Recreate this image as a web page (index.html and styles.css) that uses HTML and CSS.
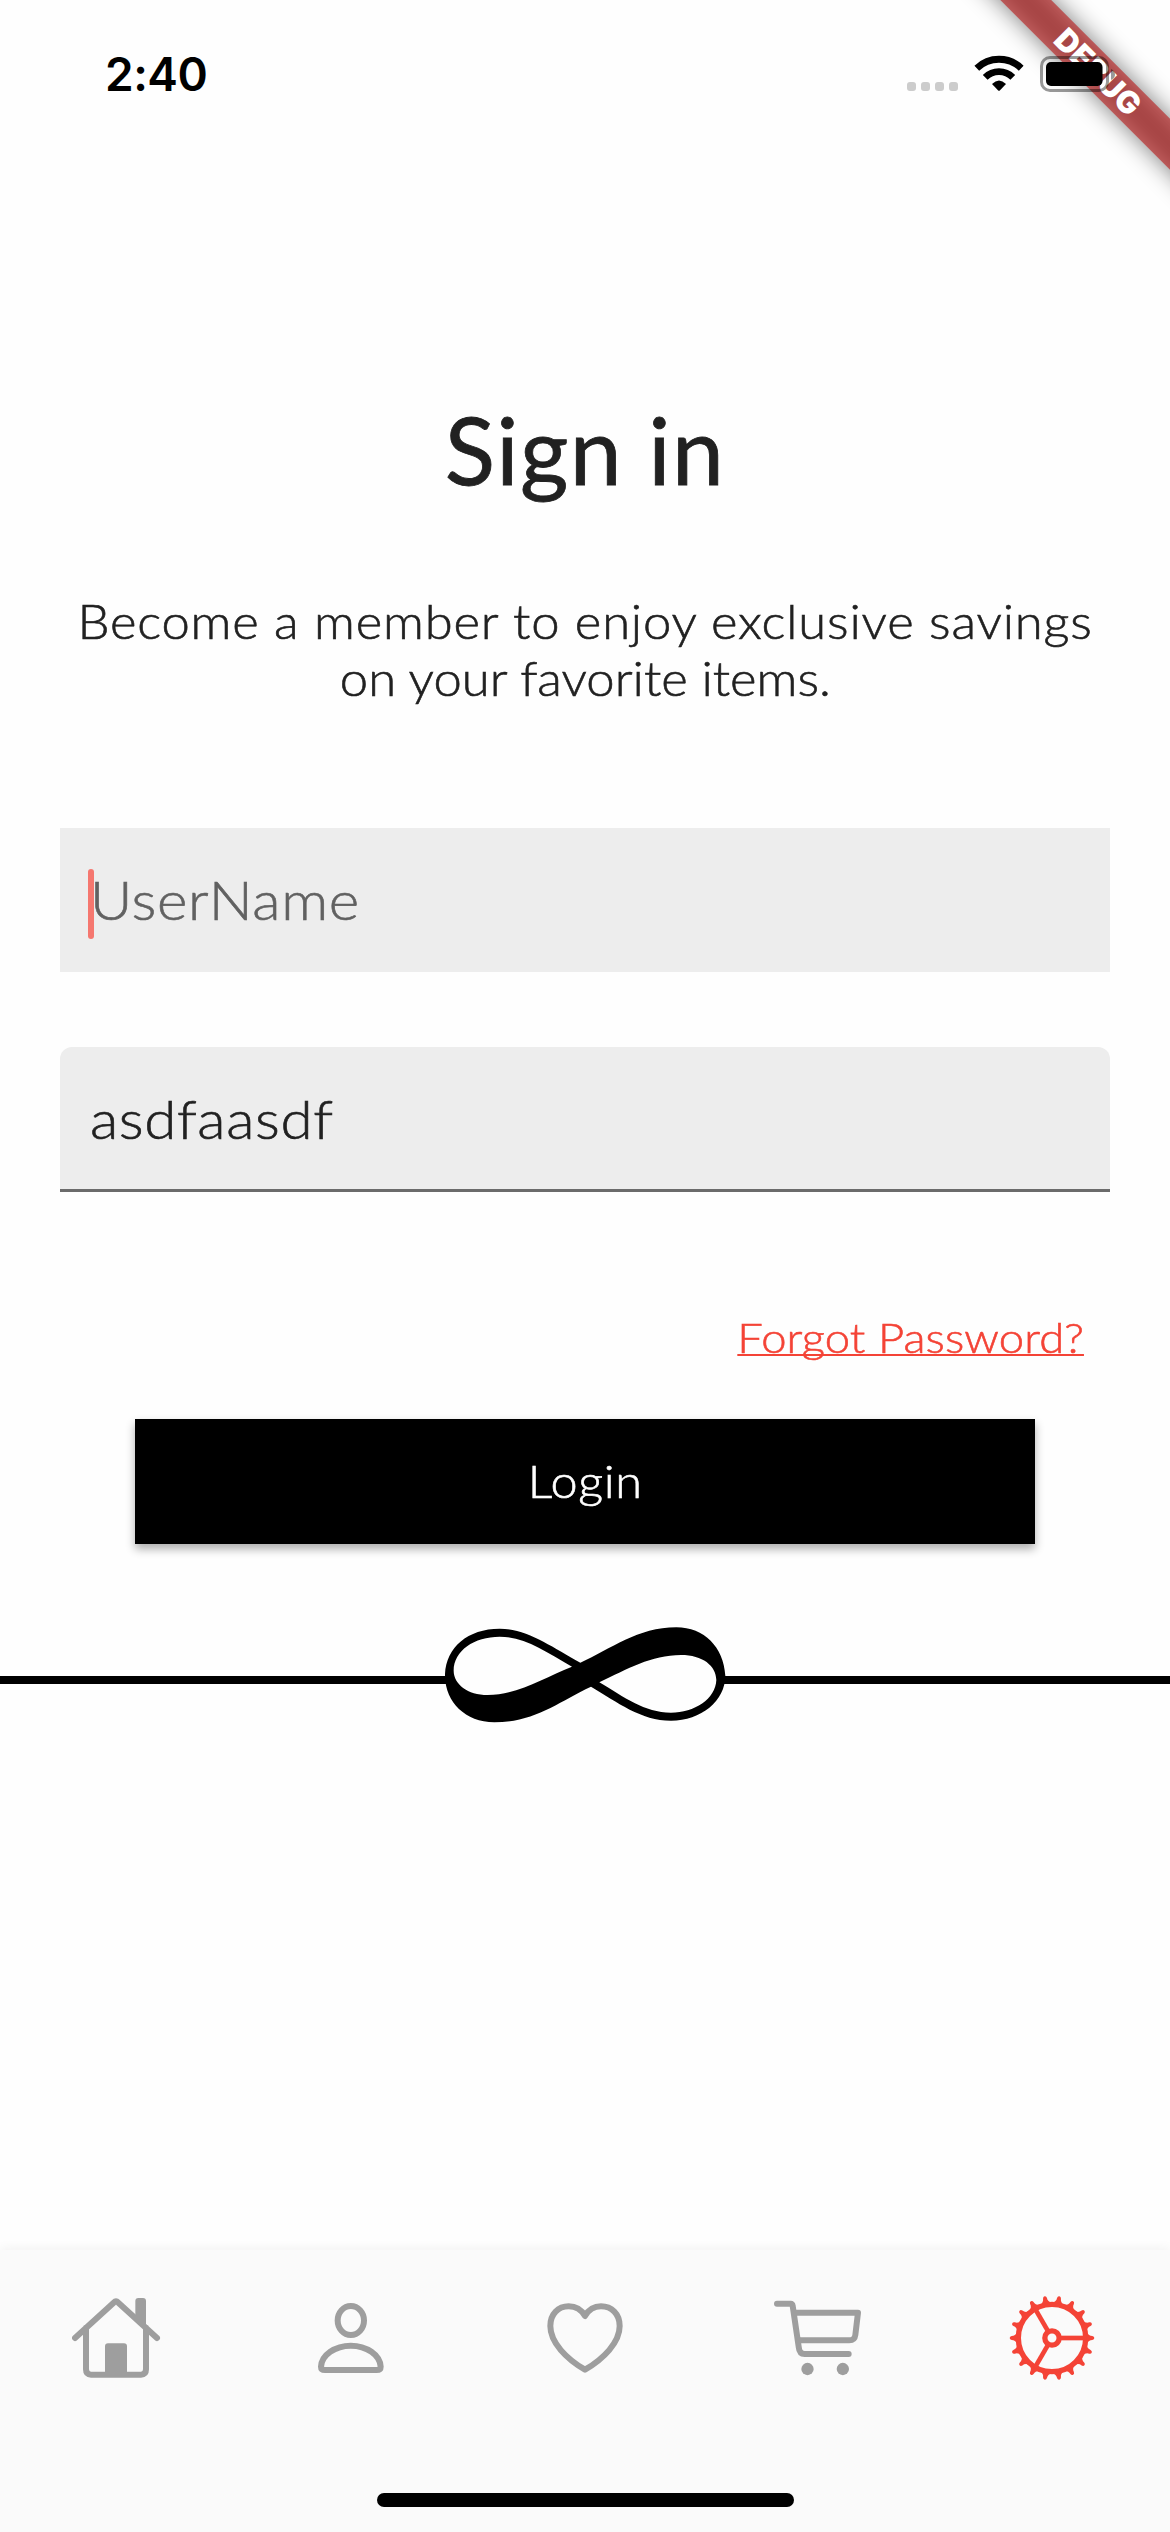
FILE: index.html
```html
<!DOCTYPE html>
<html lang="en">
<head>
<meta charset="utf-8">
<title>Sign in</title>
<link rel="stylesheet" href="styles.css">
</head>
<body>
<div class="screen">
  <div class="debug"><div class="debug-shadow"></div><div class="debug-band"><span>DEBUG</span></div></div>

  <header class="status">
    <span class="time">2:40</span>
    <div class="indicators">
      <div class="dots"><i></i><i></i><i></i><i></i></div>
      <svg class="wifi" viewBox="974 54 50 38">
        <g fill="none" stroke="#000" stroke-width="6.8">
          <path d="M976.8 68.2A32 32 0 0 1 1021.2 68.2"/>
          <path d="M985.2 77.3A19.6 19.6 0 0 1 1012.8 77.3"/>
        </g>
        <path d="M992 84Q999 77 1006 84L999.8 90.4Q999 91.2 998.2 90.4Z"/>
      </svg>
      <svg class="battery" viewBox="1040 56 76 36">
        <rect x="1041.5" y="57.5" width="66" height="33" rx="8.5" fill="none" stroke="#000" stroke-opacity=".4" stroke-width="3"/>
        <rect x="1046" y="62" width="56.500" height="24" rx="5"/>
        <path d="M1111 69Q1115 71 1115 74.500T1111 80Z" fill-opacity=".4"/>
      </svg>
    </div>
  </header>

  <main class="content">
    <h1 class="title">Sign in</h1>
    <p class="lead"><span class="wide line-a">Become a member to enjoy exclusive savings</span><br><span class="wide line-b">on your favorite items.</span></p>
    <div class="field field-user"><span class="caret"></span><span class="wide">UserName</span></div>
    <div class="field field-pass"><span class="wide">asdfaasdf</span></div>
    <a class="forgot"><span class="wide">Forgot Password?</span></a>
    <div class="login"><span class="wide">Login</span></div>
    <div class="divider">
      <span class="rule"></span>
      <svg class="infinity" viewBox="72 79 843 288">
        <path fill-rule="evenodd" d="M72 220C76 140 140 84 236 84C320 84 390 138 478 186C570 145 650 80 766 80C850 80 908 140 913 225C913 300 840 360 750 360C660 360 590 305 510 258C410 305 340 365 220 365C130 365 70 300 72 220ZM98 210C98 150 160 108 236 108C310 108 370 150 453 198C370 230 290 283 200 283C140 283 98 250 98 210ZM535 245C620 205 690 163 780 163C845 163 885 195 886 238C884 295 820 336 750 336C670 336 610 290 535 245Z"/>
      </svg>
      <span class="rule"></span>
    </div>
  </main>

  <nav class="tabs">
    <div class="tab"><svg viewBox="96 186 270 270">
      <path class="stroke" d="M105 324L221 218Q228 211 235 218L351 324M138 293V418Q138 434 153 434H303Q318 434 318 418V293"/>
      <path class="solid" d="M195 435V349Q195 340 204 340H252Q261 340 261 349V435ZM286 262V213Q286 204 295 204H309Q318 204 318 213V290Z"/>
    </svg></div>
    <div class="tab"><svg viewBox="798 186 270 270">
      <ellipse class="stroke" cx="932.5" cy="271.500" rx="39.500" ry="43.500"/>
      <path class="stroke" d="M843 410C845 375 885 347 932.500 347C980 347 1020 375 1022 410Q1022 420 1010 420H855Q843 420 843 410Z"/>
    </svg></div>
    <div class="tab"><svg viewBox="120 186 270 270">
      <path class="stroke" d="M255 258C244 239 226 229 206 229C175 229 151 252 151 288C151 338 200 387 255 419C310 387 359 338 359 288C359 252 335 229 303 229C284 229 266 239 255 258Z"/>
    </svg></div>
    <div class="tab"><svg viewBox="822 186 270 270">
      <path class="stroke" d="M831 221H872Q877 221 878 227L896 350Q898 372 914 372H1046M887 248H1074L1066 315Q1064 331 1048 331H902"/>
      <circle class="solid" cx="922.500" cy="417" r="18.500"/><circle class="solid" cx="1028.500" cy="417" r="18.500"/>
    </svg></div>
    <div class="tab tab-active"><svg viewBox="84 66 270 270">
      <defs>
        <path id="tooth" class="solid" d="M320 186Q326 198 337 198Q343 199 343 204T337 210Q326 210 320 222Z"/>
        <g id="teeth"><use href="#tooth"/><use href="#tooth" transform="rotate(20 216 204)"/><use href="#tooth" transform="rotate(40 216 204)"/></g>
        <g id="third"><use href="#teeth"/><use href="#teeth" transform="rotate(60 216 204)"/><path class="spoke" d="M240 204H318"/></g>
      </defs>
      <circle class="ring" cx="216" cy="204" r="101"/><circle class="ring" cx="216" cy="204" r="21.500"/>
      <use href="#third"/><use href="#third" transform="rotate(120 216 204)"/><use href="#third" transform="rotate(240 216 204)"/>
    </svg></div>
    <div class="home-indicator"></div>
  </nav>
</div>
</body>
</html>
```
FILE: styles.css
```css
* { box-sizing: border-box; }
body { margin: 0; }
.screen {
  position: relative;
  width: 1170px;
  height: 2532px;
  overflow: hidden;
  display: flex;
  flex-direction: column;
  background: #fefefe;
  font-family: Lato, "Open Sans", sans-serif;
  font-weight: 300;
  color: #212121;
}
.screen svg { display: block; flex: none; }

/* corner ribbon, drawn beneath the status icons */
.debug {
  position: absolute;
  left: 1170px;
  top: 0;
  width: 0;
  height: 0;
  transform: rotate(45deg);
}
.debug-shadow, .debug-band {
  position: absolute;
  left: -240px;
  top: 84px;
  width: 480px;
  height: 36px;
}
.debug-shadow { background: rgba(0, 0, 0, .5); filter: blur(12px); }
.debug-band {
  background: rgba(183, 28, 28, .63);
  color: #fff;
  font-family: Inter, sans-serif;
  font-size: 31px;
  font-weight: 900;
  line-height: 36px;
  text-align: center;
}

.status {
  position: relative;
  height: 140px;
  flex: none;
  display: flex;
  justify-content: space-between;
  padding: 0 54px 0 105px;
}
.time { font: 600 46px/56px Inter, sans-serif; letter-spacing: -.5px; padding-top: 46px; color: #000; }
.indicators { display: flex; align-items: flex-start; }
.dots { display: flex; gap: 5px; padding-top: 82px; margin-right: 16px; }
.dots i { width: 9px; height: 9px; border-radius: 3px; background: #ccc; }
.wifi { width: 50px; height: 38px; margin: 54px 16px 0 0; }
.battery { width: 76px; height: 36px; margin: 56px 0 0; }

.content { flex: 1; display: flex; flex-direction: column; }
.title {
  margin: 253px 0 0;
  font-size: 93px;
  line-height: 112px;
  font-weight: 400;
  letter-spacing: 1.4px;
  text-align: center;
  -webkit-text-stroke: .8px #212121;
}
.lead {
  margin: 88px 0 0;
  font-size: 47px;
  line-height: 57px;
  text-align: center;
}
/* opens up the letterforms horizontally */
.wide { display: inline-block; transform: scaleX(1.08); }
.line-a { letter-spacing: .75px; }
.lead, .field, .forgot, .login { -webkit-text-stroke: .6px currentColor; }
.field {
  position: relative;
  height: 144px;
  margin: 0 60px;
  padding-left: 30px;
  background: #ededed;
  font-size: 54px;
  line-height: 144px;
  letter-spacing: .6px;
}
.field .wide { transform-origin: left; }
.field-user { margin-top: 121px; color: #616161; }
.field-pass {
  height: 145px;
  margin-top: 75px;
  border-bottom: 3px solid #6b6b6b;
  border-radius: 12px 12px 0 0;
}
.caret {
  position: absolute;
  left: 28px;
  top: 41px;
  width: 6px;
  height: 70px;
  border-radius: 3px;
  background: #f5776f;
}
.forgot {
  align-self: flex-end;
  margin: 116px 86px 0 0;
  height: 58px;
  font-size: 42px;
  line-height: 58px;
  letter-spacing: .1px;
  color: #f44336;
}
.forgot .wide {
  transform-origin: right;
  text-decoration: underline;
  text-decoration-thickness: 2px;
  text-decoration-skip-ink: none;
}
.login {
  height: 125px;
  margin: 53px 135px 0;
  background: #000;
  color: #fff;
  font-size: 45px;
  line-height: 124px;
  letter-spacing: .6px;
  text-align: center;
  box-shadow: 0 5px 9px rgba(0, 0, 0, .32);
}
.divider { display: flex; align-items: center; margin-top: 83px; height: 96px; }
.rule { flex: 1; height: 8px; margin: 9px -2px 0; background: #000; }
.infinity { width: 281px; height: 96px; }

.tabs {
  position: relative;
  flex: none;
  height: 282px;
  display: flex;
  padding-top: 42px;
  background: #fafafa;
  box-shadow: 0 -2px 10px rgba(0, 0, 0, .05);
}
.tab { flex: 1; display: flex; justify-content: center; align-items: flex-start; color: #9e9e9e; }
.tab svg { width: 90px; height: 90px; }
.tab-active { color: #f44336; }
.stroke { fill: none; stroke: currentColor; stroke-width: 18; stroke-linecap: round; stroke-linejoin: round; }
.solid { fill: currentColor; }
.ring { fill: none; stroke: currentColor; stroke-width: 16; }
.spoke { fill: none; stroke: currentColor; stroke-width: 14; }
.home-indicator {
  position: absolute;
  left: 377px;
  top: 243px;
  width: 417px;
  height: 14px;
  border-radius: 7px;
  background: #000;
}
```
